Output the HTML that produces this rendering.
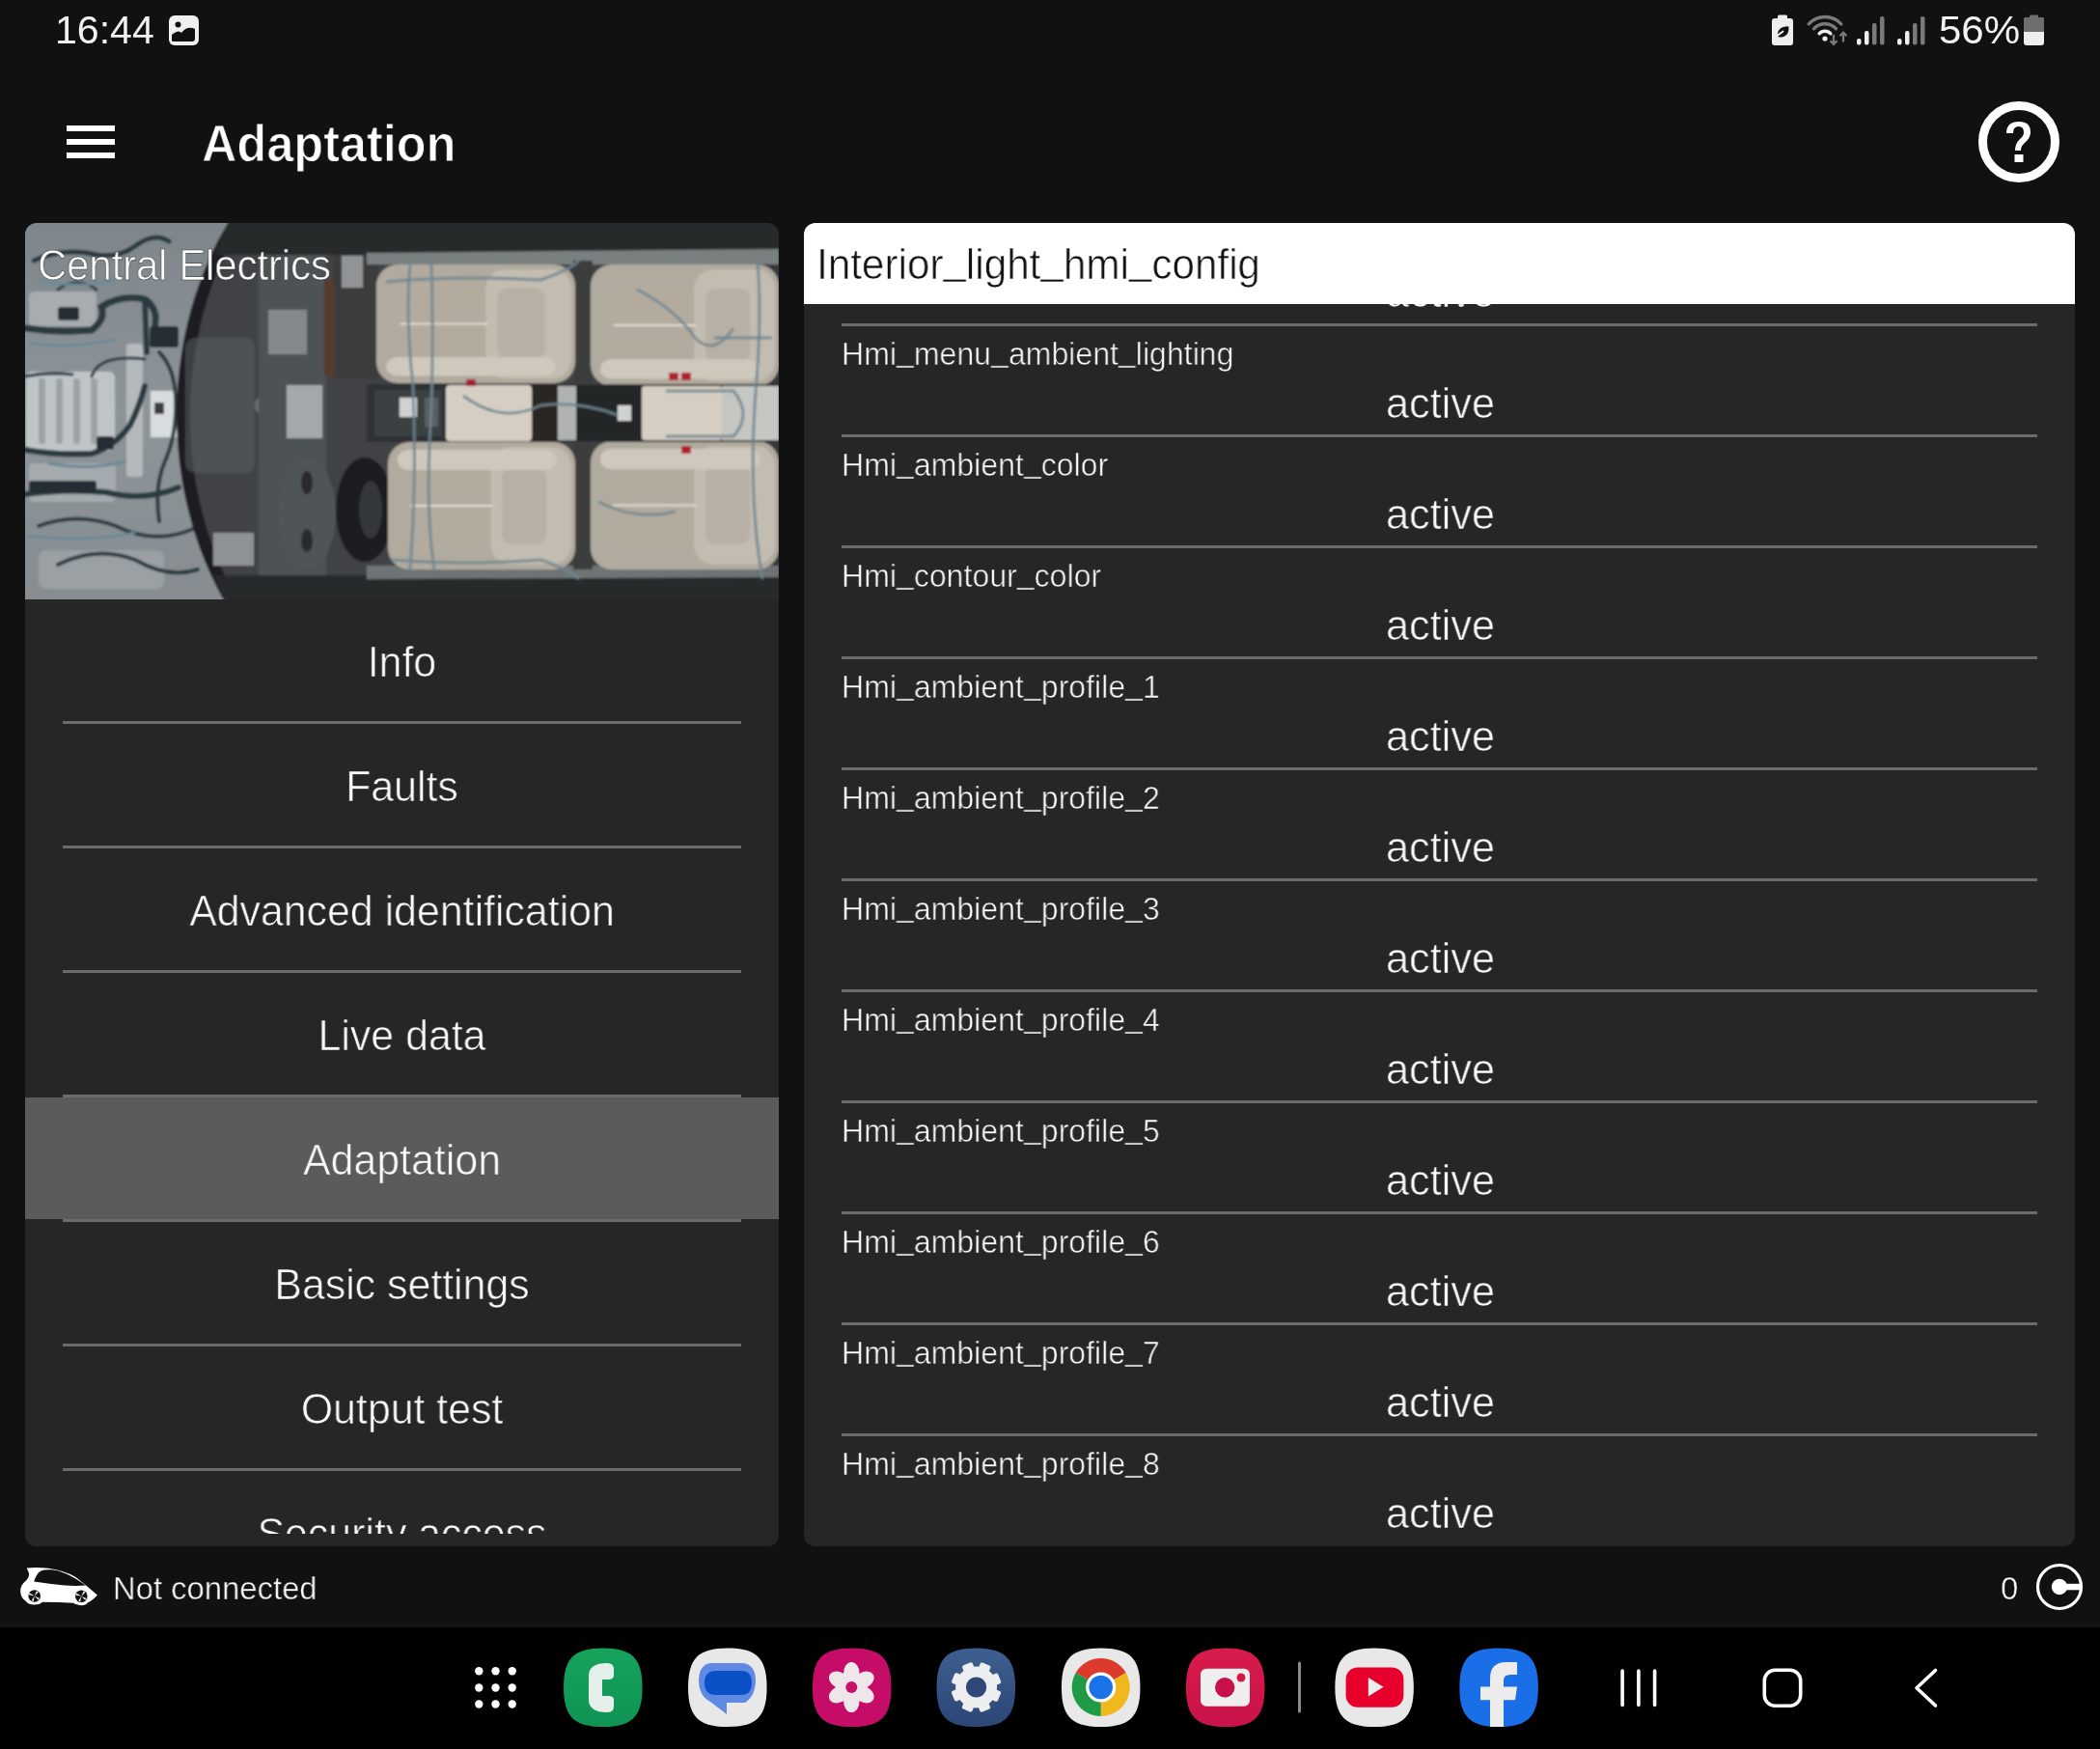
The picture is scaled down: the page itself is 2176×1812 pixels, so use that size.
<!DOCTYPE html>
<html><head><meta charset="utf-8"><style>
html,body{margin:0;padding:0;width:2176px;height:1812px;overflow:hidden;background:#111;font-family:"Liberation Sans", sans-serif;}
.a{position:absolute;}
.t{position:absolute;white-space:nowrap;will-change:transform;}
</style></head><body>
<div class="t" style="left:56.5px;top:11.34px;font-size:40px;line-height:40px;color:#f2f2f2;font-weight:400;transform:scaleX(1.026);transform-origin:left top;">16:44</div>
<svg class="a" style="left:174px;top:15px" width="33" height="33" viewBox="0 0 33 33">
<rect x="1" y="1" width="31" height="31" rx="6" fill="#f0f0f0"/>
<circle cx="10.5" cy="10.5" r="3" fill="#111"/>
<path d="M4 27 L4 21 Q11 15 14 19 Q20 11 28 15 L28 25 Q28 28 25 28 L6 28 Q4 28 4 27Z" fill="#111"/>
</svg>
<svg class="a" style="left:1830px;top:10px" width="300" height="44" viewBox="0 0 300 44">
<!-- battery saver -->
<rect x="6" y="9" width="22" height="28" rx="3" fill="#eee"/>
<rect x="12" y="5.5" width="10" height="5" rx="1.5" fill="#eee"/>
<path d="M12,27.5 Q11,17.5 23.3,17.2 Q24.5,28.5 13.5,28.6Z" fill="#111"/>
<path d="M9.5,28.8 Q13.5,25.2 17.5,22.6" stroke="#eee" stroke-width="1.9" fill="none" stroke-linecap="round"/>
<!-- wifi -->
<path d="M44.2,14.8 A23,23 0 0 1 77.8,14.8" stroke="#7a7a7a" stroke-width="3.4" fill="none" stroke-linecap="round"/>
<path d="M49.5,19.8 A15.7,15.7 0 0 1 72.5,19.8" stroke="#7a7a7a" stroke-width="3.4" fill="none" stroke-linecap="round"/>
<path d="M55.1,24.8 A8.1,8.1 0 0 1 66.9,24.8" stroke="#eee" stroke-width="3.4" fill="none" stroke-linecap="round"/>
<circle cx="61" cy="30" r="2.6" fill="#eee"/>
<path d="M70,26 L70,35.5 M66.5,32.3 L70,35.8 L73.5,32.3" stroke="#7a7a7a" stroke-width="2.3" fill="none"/>
<path d="M80,33.5 L80,24 M76.5,27.2 L80,23.7 L83.5,27.2" stroke="#7a7a7a" stroke-width="2.3" fill="none"/>
<!-- signal 1 -->
<rect x="94" y="30" width="4.5" height="6.5" rx="2" fill="#eee"/>
<rect x="102" y="22" width="4.5" height="14.5" rx="2" fill="#eee"/>
<rect x="110" y="14" width="4.5" height="22.5" rx="2" fill="#7a7a7a"/>
<rect x="118" y="7" width="4.5" height="29.5" rx="2" fill="#7a7a7a"/>
<!-- signal 2 -->
<rect x="136" y="30" width="4.5" height="6.5" rx="2" fill="#eee"/>
<rect x="144" y="22" width="4.5" height="14.5" rx="2" fill="#eee"/>
<rect x="152" y="14" width="4.5" height="22.5" rx="2" fill="#7a7a7a"/>
<rect x="160" y="7" width="4.5" height="29.5" rx="2" fill="#7a7a7a"/>
</svg>
<div class="t" style="left:2008.5px;top:11.16px;font-size:40.8px;line-height:40.8px;color:#f2f2f2;font-weight:400;transform:scaleX(1.03);transform-origin:left top;">56%</div>
<svg class="a" style="left:2096px;top:15px" width="23" height="33" viewBox="0 0 23 33">
<rect x="1" y="3" width="21" height="29" rx="3" fill="#eee"/>
<path d="M1 18 L1 6 Q1 3 4 3 L19 3 Q22 3 22 6 L22 18Z" fill="#6e6e6e"/>
<rect x="7" y="0.5" width="9" height="4" rx="1" fill="#6e6e6e"/>
</svg>
<div class="a" style="left:69px;top:130px;width:50px;height:5.5px;background:#fff"></div>
<div class="a" style="left:69px;top:144px;width:50px;height:5.5px;background:#fff"></div>
<div class="a" style="left:69px;top:158px;width:50px;height:5.5px;background:#fff"></div>
<div class="t" style="left:209.3px;top:122.45px;font-size:54.4px;line-height:54.4px;color:#fff;font-weight:700;transform:scaleX(0.9275);transform-origin:left top;-webkit-text-stroke:1px #111;">Adaptation</div>
<svg class="a" style="left:2048px;top:103px" width="88" height="88" viewBox="0 0 88 88">
<circle cx="44" cy="44" r="37.5" stroke="#fff" stroke-width="9" fill="none"/>
<path d="M31 35 Q31 23 44 23 Q56 23 56 34 Q56 40 50 45 Q46 48 46 53 L40 53 Q40 46 45 41 Q49 38 49 34 Q49 28 43.5 28 Q38 28 38 35Z" fill="#fff"/>
<rect x="39.5" y="57" width="9" height="8" fill="#fff"/>
</svg>
<div class="a" id="lp" style="left:26px;top:231px;width:781px;height:1371px;background:#262626;border-radius:12px;overflow:hidden">
<div class="a" style="left:0;top:0;width:781px;height:390px;overflow:hidden"><div style="position:absolute;left:-26px;top:-231px"><svg class="a" style="left:26px;top:231px" width="781" height="390" viewBox="26 231 781 390">
<defs><filter id="blur1" x="-5%" y="-5%" width="110%" height="110%"><feGaussianBlur stdDeviation="1.2"/></filter><linearGradient id="eng" x1="0" y1="0" x2="0" y2="1"><stop offset="0" stop-color="#7d858a"/><stop offset="0.5" stop-color="#8e959a"/><stop offset="1" stop-color="#868c90"/></linearGradient><radialGradient id="dk" cx="0.5" cy="0.5" r="0.5"><stop offset="0.7" stop-color="#3d4143"/><stop offset="1" stop-color="#2a2d2f"/></radialGradient></defs>
<g filter="url(#blur1)">
<rect x="10" y="215" width="813" height="422" fill="#34383a"/>
<rect x="10" y="215" width="436" height="422" fill="url(#eng)"/>
<rect x="27" y="385" width="92" height="82" rx="6" fill="#bfc4c7"/>
<rect x="40" y="392" width="7" height="68" rx="3" fill="#9ca2a6"/>
<rect x="58" y="392" width="7" height="68" rx="3" fill="#9ca2a6"/>
<rect x="76" y="392" width="7" height="68" rx="3" fill="#9ca2a6"/>
<rect x="94" y="392" width="7" height="68" rx="3" fill="#9ca2a6"/>
<rect x="131" y="356" width="17" height="138" rx="4" fill="#b4b9bc"/>
<rect x="156" y="405" width="28" height="48" fill="#d8dcde"/>
<rect x="160" y="417" width="10" height="12" fill="#3a3e40"/>
<rect x="30" y="302" width="70" height="36" rx="5" fill="#a6acb0"/>
<rect x="30" y="480" width="90" height="40" rx="5" fill="#a4aaae"/>
<rect x="40" y="570" width="130" height="40" rx="8" fill="#9aa0a4"/>
<path d="M26,340 Q60,345 95,342 Q110,330 105,318 Q125,305 150,310 Q165,320 160,340" stroke="#2a3a42" stroke-width="7" fill="none" stroke-linecap="round"/>
<path d="M150,310 L152,365" stroke="#2a3a42" stroke-width="6" fill="none" stroke-linecap="round"/>
<path d="M35,270 Q60,258 90,262 Q120,270 140,255 Q160,240 175,250" stroke="#2a3a42" stroke-width="5" fill="none" stroke-linecap="round"/>
<path d="M26,466 Q60,472 95,470 Q120,462 135,440 Q145,420 150,400" stroke="#2a3a42" stroke-width="6" fill="none" stroke-linecap="round"/>
<path d="M26,512 Q70,506 110,510 Q150,520 185,505" stroke="#2a3a42" stroke-width="6" fill="none" stroke-linecap="round"/>
<path d="M40,545 Q80,530 120,545 Q160,565 200,548 Q215,540 220,520" stroke="#2a3a42" stroke-width="4" fill="none" stroke-linecap="round"/>
<path d="M60,585 Q100,565 140,580 Q175,600 205,590" stroke="#2a3a42" stroke-width="4" fill="none" stroke-linecap="round"/>
<path d="M165,365 Q180,380 182,410 Q184,450 170,480 Q160,505 165,540" stroke="#2a3a42" stroke-width="4" fill="none" stroke-linecap="round"/>
<path d="M95,390 Q100,375 120,372 Q135,370 150,372" stroke="#2a3a42" stroke-width="3" fill="none" stroke-linecap="round"/>
<path d="M60,300 Q80,285 100,300" stroke="#2a3a42" stroke-width="3" fill="none" stroke-linecap="round"/>
<path d="M26,390 Q50,385 75,388" stroke="#2a3a42" stroke-width="3" fill="none" stroke-linecap="round"/>
<rect x="155" y="338" width="30" height="22" rx="3" fill="#262e34"/>
<rect x="30" y="498" width="70" height="12" rx="3" fill="#262e34"/>
<rect x="100" y="452" width="18" height="14" rx="3" fill="#262e34"/>
<rect x="60" y="318" width="22" height="14" rx="3" fill="#262e34"/>
<path d="M40,290 Q80,300 120,290" stroke="#6c8a96" stroke-width="3" fill="none"/>
<path d="M50,480 Q90,488 130,478" stroke="#6c8a96" stroke-width="3" fill="none"/>
<path d="M28,555 Q90,562 140,552" stroke="#6c8a96" stroke-width="3" fill="none"/>
<path d="M30,355 Q70,362 120,352" stroke="#6c8a96" stroke-width="3" fill="none"/>
<ellipse cx="432" cy="430" rx="249" ry="322" fill="#1c1f21"/>
<ellipse cx="440" cy="430" rx="243" ry="318" fill="#3f4345"/>
<rect x="192" y="350" width="72" height="140" rx="10" fill="#5c6266" opacity="0.5"/>

<circle cx="275" cy="420" r="11" fill="#6a6e70"/>
<circle cx="275" cy="420" r="4" fill="#303234"/>
<rect x="268" y="262" width="70" height="336" fill="#4e5254"/>
<rect x="336" y="290" width="10" height="100" fill="#553b2e"/>
<rect x="346" y="262" width="46" height="130" fill="#3a3c3c"/>
<rect x="354" y="265" width="22" height="33" fill="#909496"/>
<rect x="278" y="321" width="40" height="46" fill="#85898b"/>
<rect x="297" y="399" width="37" height="55" fill="#a4a8aa"/>
<rect x="221" y="552" width="42" height="34" fill="#8e9294"/>
<ellipse cx="318" cy="532" rx="30" ry="58" fill="#505456"/>
<ellipse cx="318" cy="500" rx="6" ry="12" fill="#2a2c2e"/>
<ellipse cx="318" cy="560" rx="6" ry="12" fill="#2a2c2e"/>
<ellipse cx="378" cy="528" rx="30" ry="54" fill="#1c1e20"/>
<ellipse cx="384" cy="528" rx="12" ry="30" fill="#34373a"/>
<path d="M243,215 L823,215 L823,264 L222,264Z" fill="#26292b"/>
<path d="M380,262 L807,258 L807,274 L380,274Z" fill="#7a7f80"/>
<path d="M221,596 L823,596 L823,637 L240,637Z" fill="#26292b"/>
<path d="M380,586 L807,586 L807,598 L380,600Z" fill="#6e7375"/>
<rect x="594" y="270" width="20" height="320" fill="#3c3e3c"/>
<rect x="390" y="274" width="206" height="123" rx="22" fill="#b1aa9e"/>
<rect x="410.6" y="293.7" width="98.9" height="83.6" rx="14" fill="#b2ab9e"/>
<rect x="503.3" y="278.9" width="88.7" height="113.2" rx="20" fill="#c3bcb0"/>
<rect x="515.7" y="298.6" width="48.8" height="73.8" rx="10" fill="#b7b0a4"/>
<rect x="400.3" y="369.9" width="175.1" height="19.7" rx="12" fill="#cfc8bd"/>
<line x1="414.7" y1="335.5" x2="505.4" y2="335.5" stroke="#e2dbd0" stroke-width="2"/>
<rect x="402" y="458" width="194" height="132" rx="22" fill="#b1aa9e"/>
<rect x="421.4" y="479.1" width="93.1" height="89.8" rx="14" fill="#b2ab9e"/>
<rect x="508.7" y="463.3" width="83.3" height="121.4" rx="20" fill="#c3bcb0"/>
<rect x="520.3" y="484.4" width="45.8" height="79.2" rx="10" fill="#b7b0a4"/>
<rect x="411.7" y="465.9" width="164.9" height="21.1" rx="12" fill="#cfc8bd"/>
<line x1="425.3" y1="524.0" x2="510.6" y2="524.0" stroke="#e2dbd0" stroke-width="2"/>
<rect x="612" y="274" width="195" height="126" rx="22" fill="#b1aa9e"/>
<rect x="631.5" y="294.2" width="93.6" height="85.7" rx="14" fill="#b2ab9e"/>
<rect x="719.2" y="279.0" width="83.8" height="115.9" rx="20" fill="#c3bcb0"/>
<rect x="731.0" y="299.2" width="46.1" height="75.6" rx="10" fill="#b7b0a4"/>
<rect x="621.8" y="372.3" width="165.8" height="20.2" rx="12" fill="#cfc8bd"/>
<line x1="635.4" y1="337.0" x2="721.2" y2="337.0" stroke="#e2dbd0" stroke-width="2"/>
<rect x="612" y="457" width="195" height="133" rx="22" fill="#b1aa9e"/>
<rect x="631.5" y="478.3" width="93.6" height="90.4" rx="14" fill="#b2ab9e"/>
<rect x="719.2" y="462.3" width="83.8" height="122.4" rx="20" fill="#c3bcb0"/>
<rect x="731.0" y="483.6" width="46.1" height="79.8" rx="10" fill="#b7b0a4"/>
<rect x="621.8" y="465.0" width="165.8" height="21.3" rx="12" fill="#cfc8bd"/>
<line x1="635.4" y1="523.5" x2="721.2" y2="523.5" stroke="#e2dbd0" stroke-width="2"/>
<rect x="380" y="398" width="443" height="60" fill="#2e3234"/>
<rect x="388" y="404" width="70" height="48" fill="#3a3f42"/>
<rect x="414" y="412" width="18" height="20" fill="#cfd2d2"/>
<rect x="440" y="412" width="14" height="30" fill="#5a5f62"/>
<rect x="462" y="399" width="89" height="58" rx="4" fill="#d6cec2"/>
<rect x="551" y="399" width="27" height="58" fill="#2a2623"/>
<rect x="578" y="400" width="19" height="56" fill="#b0b2b0"/>
<rect x="597" y="400" width="68" height="56" fill="#242628"/>
<rect x="640" y="420" width="14" height="16" fill="#cfd2d2"/>
<rect x="665" y="400" width="83" height="56" rx="3" fill="#d6cec2"/>
<rect x="748" y="400" width="59" height="56" fill="#c6c6c2"/>
<rect x="693" y="386" width="10" height="8" fill="#b02030"/>
<rect x="706" y="386" width="10" height="8" fill="#b02030"/>
<rect x="706" y="462" width="10" height="8" fill="#b02030"/>
<rect x="483" y="393" width="10" height="7" fill="#a02030"/>
<path d="M425,272 Q420,330 428,400 Q432,500 425,590" stroke="#6e8690" stroke-width="3" fill="none" opacity="0.85"/>
<path d="M447,272 Q450,380 445,460 Q442,540 450,590" stroke="#6e8690" stroke-width="3" fill="none" opacity="0.85"/>
<path d="M400,292 Q470,285 560,290 Q590,280 600,270" stroke="#6e8690" stroke-width="3" fill="none" opacity="0.85"/>
<path d="M405,580 Q480,586 560,580 Q590,590 600,600" stroke="#6e8690" stroke-width="3" fill="none" opacity="0.85"/>
<path d="M785,272 Q790,330 782,420 Q776,520 790,600" stroke="#6e8690" stroke-width="3" fill="none" opacity="0.85"/>
<path d="M660,300 Q700,320 720,350 Q740,370 760,340" stroke="#6e8690" stroke-width="3" fill="none" opacity="0.85"/>
<path d="M480,410 Q520,440 560,420 Q600,415 640,430" stroke="#6e8690" stroke-width="3" fill="none" opacity="0.85"/>
<path d="M690,405 L760,405 Q780,430 760,452 L690,452" stroke="#6e8690" stroke-width="3" fill="none" opacity="0.85"/>
<path d="M740,350 L800,350" stroke="#6e8690" stroke-width="3" fill="none" opacity="0.85"/>
<path d="M620,520 Q660,540 700,530" stroke="#6e8690" stroke-width="3" fill="none" opacity="0.85"/>
</g>
</svg>
</div></div>
<div class="a" style="left:0;top:906px;width:781px;height:126px;background:#5b5b5b"></div>
<div class="t" style="left:0px;top:432.83px;font-size:44.5px;line-height:44.5px;color:#fcfcfc;font-weight:400;width:781px;text-align:center;transform:scaleX(0.963);transform-origin:center top;-webkit-text-stroke:0.7px #262626;">Info</div>
<div class="a" style="left:39px;top:516px;width:703px;height:3px;background:#6b6b6b"></div>
<div class="t" style="left:0px;top:561.83px;font-size:44.5px;line-height:44.5px;color:#fcfcfc;font-weight:400;width:781px;text-align:center;transform:scaleX(0.963);transform-origin:center top;-webkit-text-stroke:0.7px #262626;">Faults</div>
<div class="a" style="left:39px;top:645px;width:703px;height:3px;background:#6b6b6b"></div>
<div class="t" style="left:0px;top:690.83px;font-size:44.5px;line-height:44.5px;color:#fcfcfc;font-weight:400;width:781px;text-align:center;transform:scaleX(0.963);transform-origin:center top;-webkit-text-stroke:0.7px #262626;">Advanced identification</div>
<div class="a" style="left:39px;top:774px;width:703px;height:3px;background:#6b6b6b"></div>
<div class="t" style="left:0px;top:819.83px;font-size:44.5px;line-height:44.5px;color:#fcfcfc;font-weight:400;width:781px;text-align:center;transform:scaleX(0.963);transform-origin:center top;-webkit-text-stroke:0.7px #262626;">Live data</div>
<div class="a" style="left:39px;top:903px;width:703px;height:3px;background:#6b6b6b"></div>
<div class="t" style="left:0px;top:948.83px;font-size:44.5px;line-height:44.5px;color:#fcfcfc;font-weight:400;width:781px;text-align:center;transform:scaleX(0.963);transform-origin:center top;-webkit-text-stroke:0.7px #5b5b5b;">Adaptation</div>
<div class="a" style="left:39px;top:1032px;width:703px;height:3px;background:#6b6b6b"></div>
<div class="t" style="left:0px;top:1077.83px;font-size:44.5px;line-height:44.5px;color:#fcfcfc;font-weight:400;width:781px;text-align:center;transform:scaleX(0.963);transform-origin:center top;-webkit-text-stroke:0.7px #262626;">Basic settings</div>
<div class="a" style="left:39px;top:1161px;width:703px;height:3px;background:#6b6b6b"></div>
<div class="t" style="left:0px;top:1206.83px;font-size:44.5px;line-height:44.5px;color:#fcfcfc;font-weight:400;width:781px;text-align:center;transform:scaleX(0.963);transform-origin:center top;-webkit-text-stroke:0.7px #262626;">Output test</div>
<div class="a" style="left:39px;top:1290px;width:703px;height:3px;background:#6b6b6b"></div>
<div class="t" style="left:0px;top:1335.83px;font-size:44.5px;line-height:44.5px;color:#fcfcfc;font-weight:400;width:781px;text-align:center;transform:scaleX(0.963);transform-origin:center top;-webkit-text-stroke:0.7px #262626;">Security access</div>
</div>
<div class="a" style="left:26px;top:1589px;width:781px;height:13px;background:#262626;border-radius:0 0 12px 12px"></div>
<div class="t" style="left:38.7px;top:254.19px;font-size:43.6px;line-height:43.6px;color:#fff;font-weight:400;transform:scaleX(0.9576);transform-origin:left top;-webkit-text-stroke:0.6px rgba(40,44,46,0.9);">Central Electrics</div>
<div class="a" id="rp" style="left:833px;top:231px;width:1317px;height:1371px;background:#262626;border-radius:12px;overflow:hidden">
<div class="t" style="left:1px;top:49.75px;font-size:44px;line-height:44px;color:#fcfcfc;font-weight:400;width:1317px;text-align:center;transform:scaleX(0.984);transform-origin:center top;-webkit-text-stroke:0.7px #262626;">active</div>
<div class="t" style="left:39.1px;top:118.64px;font-size:33.5px;line-height:33.5px;color:#fcfcfc;font-weight:400;transform:scaleX(0.957);transform-origin:left top;-webkit-text-stroke:0.6px #262626;">Hmi<span style="position:relative;top:-4.5px">_</span>menu<span style="position:relative;top:-4.5px">_</span>ambient<span style="position:relative;top:-4.5px">_</span>lighting</div>
<div class="t" style="left:1px;top:164.75px;font-size:44px;line-height:44px;color:#fcfcfc;font-weight:400;width:1317px;text-align:center;transform:scaleX(0.984);transform-origin:center top;-webkit-text-stroke:0.7px #262626;">active</div>
<div class="a" style="left:39px;top:104px;width:1239px;height:3px;background:#6b6b6b"></div>
<div class="t" style="left:39.1px;top:233.64px;font-size:33.5px;line-height:33.5px;color:#fcfcfc;font-weight:400;transform:scaleX(0.957);transform-origin:left top;-webkit-text-stroke:0.6px #262626;">Hmi<span style="position:relative;top:-4.5px">_</span>ambient<span style="position:relative;top:-4.5px">_</span>color</div>
<div class="t" style="left:1px;top:279.75px;font-size:44px;line-height:44px;color:#fcfcfc;font-weight:400;width:1317px;text-align:center;transform:scaleX(0.984);transform-origin:center top;-webkit-text-stroke:0.7px #262626;">active</div>
<div class="a" style="left:39px;top:219px;width:1239px;height:3px;background:#6b6b6b"></div>
<div class="t" style="left:39.1px;top:348.64px;font-size:33.5px;line-height:33.5px;color:#fcfcfc;font-weight:400;transform:scaleX(0.957);transform-origin:left top;-webkit-text-stroke:0.6px #262626;">Hmi<span style="position:relative;top:-4.5px">_</span>contour<span style="position:relative;top:-4.5px">_</span>color</div>
<div class="t" style="left:1px;top:394.75px;font-size:44px;line-height:44px;color:#fcfcfc;font-weight:400;width:1317px;text-align:center;transform:scaleX(0.984);transform-origin:center top;-webkit-text-stroke:0.7px #262626;">active</div>
<div class="a" style="left:39px;top:334px;width:1239px;height:3px;background:#6b6b6b"></div>
<div class="t" style="left:39.1px;top:463.64px;font-size:33.5px;line-height:33.5px;color:#fcfcfc;font-weight:400;transform:scaleX(0.957);transform-origin:left top;-webkit-text-stroke:0.6px #262626;">Hmi<span style="position:relative;top:-4.5px">_</span>ambient<span style="position:relative;top:-4.5px">_</span>profile<span style="position:relative;top:-4.5px">_</span>1</div>
<div class="t" style="left:1px;top:509.75px;font-size:44px;line-height:44px;color:#fcfcfc;font-weight:400;width:1317px;text-align:center;transform:scaleX(0.984);transform-origin:center top;-webkit-text-stroke:0.7px #262626;">active</div>
<div class="a" style="left:39px;top:449px;width:1239px;height:3px;background:#6b6b6b"></div>
<div class="t" style="left:39.1px;top:578.64px;font-size:33.5px;line-height:33.5px;color:#fcfcfc;font-weight:400;transform:scaleX(0.957);transform-origin:left top;-webkit-text-stroke:0.6px #262626;">Hmi<span style="position:relative;top:-4.5px">_</span>ambient<span style="position:relative;top:-4.5px">_</span>profile<span style="position:relative;top:-4.5px">_</span>2</div>
<div class="t" style="left:1px;top:624.75px;font-size:44px;line-height:44px;color:#fcfcfc;font-weight:400;width:1317px;text-align:center;transform:scaleX(0.984);transform-origin:center top;-webkit-text-stroke:0.7px #262626;">active</div>
<div class="a" style="left:39px;top:564px;width:1239px;height:3px;background:#6b6b6b"></div>
<div class="t" style="left:39.1px;top:693.64px;font-size:33.5px;line-height:33.5px;color:#fcfcfc;font-weight:400;transform:scaleX(0.957);transform-origin:left top;-webkit-text-stroke:0.6px #262626;">Hmi<span style="position:relative;top:-4.5px">_</span>ambient<span style="position:relative;top:-4.5px">_</span>profile<span style="position:relative;top:-4.5px">_</span>3</div>
<div class="t" style="left:1px;top:739.75px;font-size:44px;line-height:44px;color:#fcfcfc;font-weight:400;width:1317px;text-align:center;transform:scaleX(0.984);transform-origin:center top;-webkit-text-stroke:0.7px #262626;">active</div>
<div class="a" style="left:39px;top:679px;width:1239px;height:3px;background:#6b6b6b"></div>
<div class="t" style="left:39.1px;top:808.64px;font-size:33.5px;line-height:33.5px;color:#fcfcfc;font-weight:400;transform:scaleX(0.957);transform-origin:left top;-webkit-text-stroke:0.6px #262626;">Hmi<span style="position:relative;top:-4.5px">_</span>ambient<span style="position:relative;top:-4.5px">_</span>profile<span style="position:relative;top:-4.5px">_</span>4</div>
<div class="t" style="left:1px;top:854.75px;font-size:44px;line-height:44px;color:#fcfcfc;font-weight:400;width:1317px;text-align:center;transform:scaleX(0.984);transform-origin:center top;-webkit-text-stroke:0.7px #262626;">active</div>
<div class="a" style="left:39px;top:794px;width:1239px;height:3px;background:#6b6b6b"></div>
<div class="t" style="left:39.1px;top:923.64px;font-size:33.5px;line-height:33.5px;color:#fcfcfc;font-weight:400;transform:scaleX(0.957);transform-origin:left top;-webkit-text-stroke:0.6px #262626;">Hmi<span style="position:relative;top:-4.5px">_</span>ambient<span style="position:relative;top:-4.5px">_</span>profile<span style="position:relative;top:-4.5px">_</span>5</div>
<div class="t" style="left:1px;top:969.75px;font-size:44px;line-height:44px;color:#fcfcfc;font-weight:400;width:1317px;text-align:center;transform:scaleX(0.984);transform-origin:center top;-webkit-text-stroke:0.7px #262626;">active</div>
<div class="a" style="left:39px;top:909px;width:1239px;height:3px;background:#6b6b6b"></div>
<div class="t" style="left:39.1px;top:1038.64px;font-size:33.5px;line-height:33.5px;color:#fcfcfc;font-weight:400;transform:scaleX(0.957);transform-origin:left top;-webkit-text-stroke:0.6px #262626;">Hmi<span style="position:relative;top:-4.5px">_</span>ambient<span style="position:relative;top:-4.5px">_</span>profile<span style="position:relative;top:-4.5px">_</span>6</div>
<div class="t" style="left:1px;top:1084.75px;font-size:44px;line-height:44px;color:#fcfcfc;font-weight:400;width:1317px;text-align:center;transform:scaleX(0.984);transform-origin:center top;-webkit-text-stroke:0.7px #262626;">active</div>
<div class="a" style="left:39px;top:1024px;width:1239px;height:3px;background:#6b6b6b"></div>
<div class="t" style="left:39.1px;top:1153.64px;font-size:33.5px;line-height:33.5px;color:#fcfcfc;font-weight:400;transform:scaleX(0.957);transform-origin:left top;-webkit-text-stroke:0.6px #262626;">Hmi<span style="position:relative;top:-4.5px">_</span>ambient<span style="position:relative;top:-4.5px">_</span>profile<span style="position:relative;top:-4.5px">_</span>7</div>
<div class="t" style="left:1px;top:1199.75px;font-size:44px;line-height:44px;color:#fcfcfc;font-weight:400;width:1317px;text-align:center;transform:scaleX(0.984);transform-origin:center top;-webkit-text-stroke:0.7px #262626;">active</div>
<div class="a" style="left:39px;top:1139px;width:1239px;height:3px;background:#6b6b6b"></div>
<div class="t" style="left:39.1px;top:1268.64px;font-size:33.5px;line-height:33.5px;color:#fcfcfc;font-weight:400;transform:scaleX(0.957);transform-origin:left top;-webkit-text-stroke:0.6px #262626;">Hmi<span style="position:relative;top:-4.5px">_</span>ambient<span style="position:relative;top:-4.5px">_</span>profile<span style="position:relative;top:-4.5px">_</span>8</div>
<div class="t" style="left:1px;top:1314.75px;font-size:44px;line-height:44px;color:#fcfcfc;font-weight:400;width:1317px;text-align:center;transform:scaleX(0.984);transform-origin:center top;-webkit-text-stroke:0.7px #262626;">active</div>
<div class="a" style="left:39px;top:1254px;width:1239px;height:3px;background:#6b6b6b"></div>
<div class="a" style="left:0;top:0;width:1317px;height:84px;background:#fff"></div>
<div class="t" style="left:13px;top:21.25px;font-size:44.6px;line-height:44.6px;color:#111;font-weight:400;transform:scaleX(0.9466);transform-origin:left top;-webkit-text-stroke:0.7px #fff;">Interior<span style="position:relative;top:-6px">_</span>light<span style="position:relative;top:-6px">_</span>hmi<span style="position:relative;top:-6px">_</span>config</div>
</div>
<svg class="a" style="left:10px;top:1610px" width="120" height="90" viewBox="0 0 2100 1575">
<path d="M310 255 Q480 235 700 258 Q1000 300 1200 420 Q1380 560 1590 745 Q1500 850 1420 880 Q1380 930 1300 930 Q1200 925 1160 890 Q900 870 600 870 Q540 920 450 920 Q340 915 300 860 Q200 800 195 680 Q195 560 290 490 Q360 420 350 350 Q330 300 310 255Z" fill="#fff"/>
<path d="M440 500 Q490 350 560 310 Q620 280 760 285 Q1000 300 1380 570 Q1200 585 1000 570 Q700 540 440 500Z" fill="#111"/>
<circle cx="450" cy="760" r="110" fill="#111"/>
<circle cx="1300" cy="765" r="110" fill="#111"/>
<g fill="#fff">
<path d="M450 760 L490 670 L520 690Z"/><path d="M450 760 L540 800 L520 830Z"/><path d="M450 760 L430 860 L400 840Z"/><path d="M450 760 L350 740 L360 705Z"/>
<path d="M1300 765 L1340 675 L1370 695Z"/><path d="M1300 765 L1390 805 L1370 835Z"/><path d="M1300 765 L1280 865 L1250 845Z"/><path d="M1300 765 L1200 745 L1210 710Z"/>
</g>
</svg>
<div class="t" style="left:116.8px;top:1628.32px;font-size:34px;line-height:34px;color:#fff;font-weight:400;transform:scaleX(0.965);transform-origin:left top;-webkit-text-stroke:0.5px #111;">Not connected</div>
<div class="t" style="left:2073.4px;top:1629.07px;font-size:33px;line-height:33px;color:#fff;font-weight:400;-webkit-text-stroke:0.5px #111;">0</div>
<svg class="a" style="left:2108px;top:1618px" width="52" height="52" viewBox="0 0 52 52">
<circle cx="26" cy="26" r="22.5" stroke="#fff" stroke-width="3.2" fill="none"/>
<circle cx="26" cy="26" r="8.2" fill="#fff"/>
<rect x="26" y="22.8" width="22" height="6.5" fill="#fff"/>
</svg>
<div class="a" style="left:0;top:1682px;width:2176px;height:4px;background:#141414"></div>
<div class="a" style="left:0;top:1686px;width:2176px;height:126px;background:#000"></div>
<svg class="a" style="left:0;top:1686px" width="2176" height="126" viewBox="0 1686 2176 126">
<circle cx="496.3" cy="1731.2" r="4.2" fill="#fff"/>
<circle cx="496.3" cy="1748.5" r="4.2" fill="#fff"/>
<circle cx="496.3" cy="1765.5" r="4.2" fill="#fff"/>
<circle cx="513.5" cy="1731.2" r="4.2" fill="#fff"/>
<circle cx="513.5" cy="1748.5" r="4.2" fill="#fff"/>
<circle cx="513.5" cy="1765.5" r="4.2" fill="#fff"/>
<circle cx="530.7" cy="1731.2" r="4.2" fill="#fff"/>
<circle cx="530.7" cy="1748.5" r="4.2" fill="#fff"/>
<circle cx="530.7" cy="1765.5" r="4.2" fill="#fff"/>
<defs><linearGradient id="gph" x1="0" y1="0" x2="0" y2="1"><stop offset="0" stop-color="#16a35c"/><stop offset="1" stop-color="#0f9455"/></linearGradient><linearGradient id="gset" x1="0" y1="0" x2="0" y2="1"><stop offset="0" stop-color="#3d5f8f"/><stop offset="1" stop-color="#2c4676"/></linearGradient><linearGradient id="gcam" x1="0" y1="0" x2="0" y2="1"><stop offset="0" stop-color="#d81c4a"/><stop offset="1" stop-color="#c8124a"/></linearGradient></defs>
<path d="M584.05,1748.3 C584.05,1718.145 594.645,1707.55 624.8,1707.55 C654.9549999999999,1707.55 665.55,1718.145 665.55,1748.3 C665.55,1778.455 654.9549999999999,1789.05 624.8,1789.05 C594.645,1789.05 584.05,1778.455 584.05,1748.3Z" fill="url(#gph)"/>
<path d="M629,1723 Q611,1723 610,1735 L610,1762 Q611,1774 629,1774 Q636,1774 636,1768 L636,1761 Q636,1757 630,1757 L624,1757 L624,1740 L630,1740 Q636,1740 636,1736 L636,1729 Q636,1723 629,1723Z" fill="#e6f0ea"/>
<path d="M713.05,1748.3 C713.05,1718.145 723.645,1707.55 753.8,1707.55 C783.9549999999999,1707.55 794.55,1718.145 794.55,1748.3 C794.55,1778.455 783.9549999999999,1789.05 753.8,1789.05 C723.645,1789.05 713.05,1778.455 713.05,1748.3Z" fill="#e8e8e8"/>
<path d="M738,1723 L768,1723 Q782,1723 783,1740 Q783,1757 772,1764 L753,1764 L753,1776 L736,1763 Q724,1757 724,1740 Q725,1723 738,1723Z" fill="#5f8ae4"/>
<path d="M742,1731 L768,1731 Q779,1731 779,1743.5 Q779,1756 768,1756 L742,1756 Q730,1756 730,1743.5 Q730,1731 742,1731Z" fill="#0b50c6"/>
<path d="M841.95,1748.3 C841.95,1718.145 852.5450000000001,1707.55 882.7,1707.55 C912.855,1707.55 923.45,1718.145 923.45,1748.3 C923.45,1778.455 912.855,1789.05 882.7,1789.05 C852.5450000000001,1789.05 841.95,1778.455 841.95,1748.3Z" fill="#c50d68"/>
<ellipse cx="882.3" cy="1733.5" rx="8.2" ry="11.5" transform="rotate(0 882.3 1748)" fill="#eee6ea"/>
<ellipse cx="882.3" cy="1733.5" rx="8.2" ry="11.5" transform="rotate(60 882.3 1748)" fill="#eee6ea"/>
<ellipse cx="882.3" cy="1733.5" rx="8.2" ry="11.5" transform="rotate(120 882.3 1748)" fill="#eee6ea"/>
<ellipse cx="882.3" cy="1733.5" rx="8.2" ry="11.5" transform="rotate(180 882.3 1748)" fill="#eee6ea"/>
<ellipse cx="882.3" cy="1733.5" rx="8.2" ry="11.5" transform="rotate(240 882.3 1748)" fill="#eee6ea"/>
<ellipse cx="882.3" cy="1733.5" rx="8.2" ry="11.5" transform="rotate(300 882.3 1748)" fill="#eee6ea"/>
<circle cx="882.3" cy="1748" r="6" fill="#c9106a"/>
<path d="M970.55,1748.3 C970.55,1718.145 981.145,1707.55 1011.3,1707.55 C1041.455,1707.55 1052.05,1718.145 1052.05,1748.3 C1052.05,1778.455 1041.455,1789.05 1011.3,1789.05 C981.145,1789.05 970.55,1778.455 970.55,1748.3Z" fill="url(#gset)"/>
<g fill="#eceef0">
<circle cx="1011.6" cy="1748" r="21.5"/>
<rect x="1006" y="1722" width="11.5" height="10" rx="2" transform="rotate(22.5 1011.6 1748)"/>
<rect x="1006" y="1722" width="11.5" height="10" rx="2" transform="rotate(67.5 1011.6 1748)"/>
<rect x="1006" y="1722" width="11.5" height="10" rx="2" transform="rotate(112.5 1011.6 1748)"/>
<rect x="1006" y="1722" width="11.5" height="10" rx="2" transform="rotate(157.5 1011.6 1748)"/>
<rect x="1006" y="1722" width="11.5" height="10" rx="2" transform="rotate(202.5 1011.6 1748)"/>
<rect x="1006" y="1722" width="11.5" height="10" rx="2" transform="rotate(247.5 1011.6 1748)"/>
<rect x="1006" y="1722" width="11.5" height="10" rx="2" transform="rotate(292.5 1011.6 1748)"/>
<rect x="1006" y="1722" width="11.5" height="10" rx="2" transform="rotate(337.5 1011.6 1748)"/>
</g>
<circle cx="1011.6" cy="1748" r="10.6" fill="#2f4877"/>
<path d="M1099.95,1748.3 C1099.95,1718.145 1110.545,1707.55 1140.7,1707.55 C1170.855,1707.55 1181.45,1718.145 1181.45,1748.3 C1181.45,1778.455 1170.855,1789.05 1140.7,1789.05 C1110.545,1789.05 1099.95,1778.455 1099.95,1748.3Z" fill="#e8e8e8"/>
<path d="M1140.7,1748 L1114.72,1733.00 A30,30 0 0 1 1166.68,1733.00Z" fill="#db3a2c"/>
<path d="M1140.7,1748 L1166.68,1733.00 A30,30 0 0 1 1140.70,1778.00Z" fill="#f0b81c"/>
<path d="M1140.7,1748 L1140.70,1778.00 A30,30 0 0 1 1114.72,1733.00Z" fill="#1f9a45"/>
<circle cx="1140.7" cy="1748" r="15.6" fill="#fff"/>
<circle cx="1140.7" cy="1748" r="12.3" fill="#1a73e8"/>
<path d="M1228.95,1748.3 C1228.95,1718.145 1239.545,1707.55 1269.7,1707.55 C1299.855,1707.55 1310.45,1718.145 1310.45,1748.3 C1310.45,1778.455 1299.855,1789.05 1269.7,1789.05 C1239.545,1789.05 1228.95,1778.455 1228.95,1748.3Z" fill="url(#gcam)"/>
<rect x="1244" y="1728.8" width="51" height="39" rx="6" fill="#eeeeee"/>
<circle cx="1269.2" cy="1748.3" r="10.2" fill="#c8104a"/>
<circle cx="1286" cy="1738" r="4.5" fill="#d41848"/>
<rect x="1345" y="1721.5" width="3" height="53" rx="1.5" fill="#8a8a8a"/>
<path d="M1383.35,1748.3 C1383.35,1718.145 1393.945,1707.55 1424.1,1707.55 C1454.2549999999999,1707.55 1464.85,1718.145 1464.85,1748.3 C1464.85,1778.455 1454.2549999999999,1789.05 1424.1,1789.05 C1393.945,1789.05 1383.35,1778.455 1383.35,1748.3Z" fill="#e8e8e8"/>
<rect x="1394.6" y="1727.5" width="59.8" height="41.2" rx="12" fill="#e8002d"/>
<path d="M1417.8,1738 L1433.5,1747.8 L1417.8,1757.6Z" fill="#eeeeee"/>
<path d="M1512.35,1748.3 C1512.35,1718.145 1522.945,1707.55 1553.1,1707.55 C1583.2549999999999,1707.55 1593.85,1718.145 1593.85,1748.3 C1593.85,1778.455 1583.2549999999999,1789.05 1553.1,1789.05 C1522.945,1789.05 1512.35,1778.455 1512.35,1748.3Z" fill="#1a6fe8"/>
<path d="M1544,1789 L1544,1761.3 L1534,1761.3 L1534,1747.4 L1544,1747.4 L1544,1739 Q1544,1722 1561,1722 L1572,1722 L1572,1735 L1565,1735 Q1558,1735 1558,1741 L1558,1747.4 L1572,1747.4 L1570,1761.3 L1558,1761.3 L1558,1789Z" fill="#ececec"/>
<line x1="1681.1" y1="1731" x2="1681.1" y2="1766.5" stroke="#fff" stroke-width="3.6" stroke-linecap="round"/>
<line x1="1697.9" y1="1731" x2="1697.9" y2="1766.5" stroke="#fff" stroke-width="3.6" stroke-linecap="round"/>
<line x1="1714.6" y1="1731" x2="1714.6" y2="1766.5" stroke="#fff" stroke-width="3.6" stroke-linecap="round"/>
<rect x="1828.3" y="1730.3" width="37.4" height="37" rx="11" fill="none" stroke="#fff" stroke-width="3.6"/>
<path d="M2005.5,1730.5 L1986,1748.8 L2005.5,1767" fill="none" stroke="#fff" stroke-width="3.6" stroke-linecap="round" stroke-linejoin="round"/>
</svg>

</body></html>
